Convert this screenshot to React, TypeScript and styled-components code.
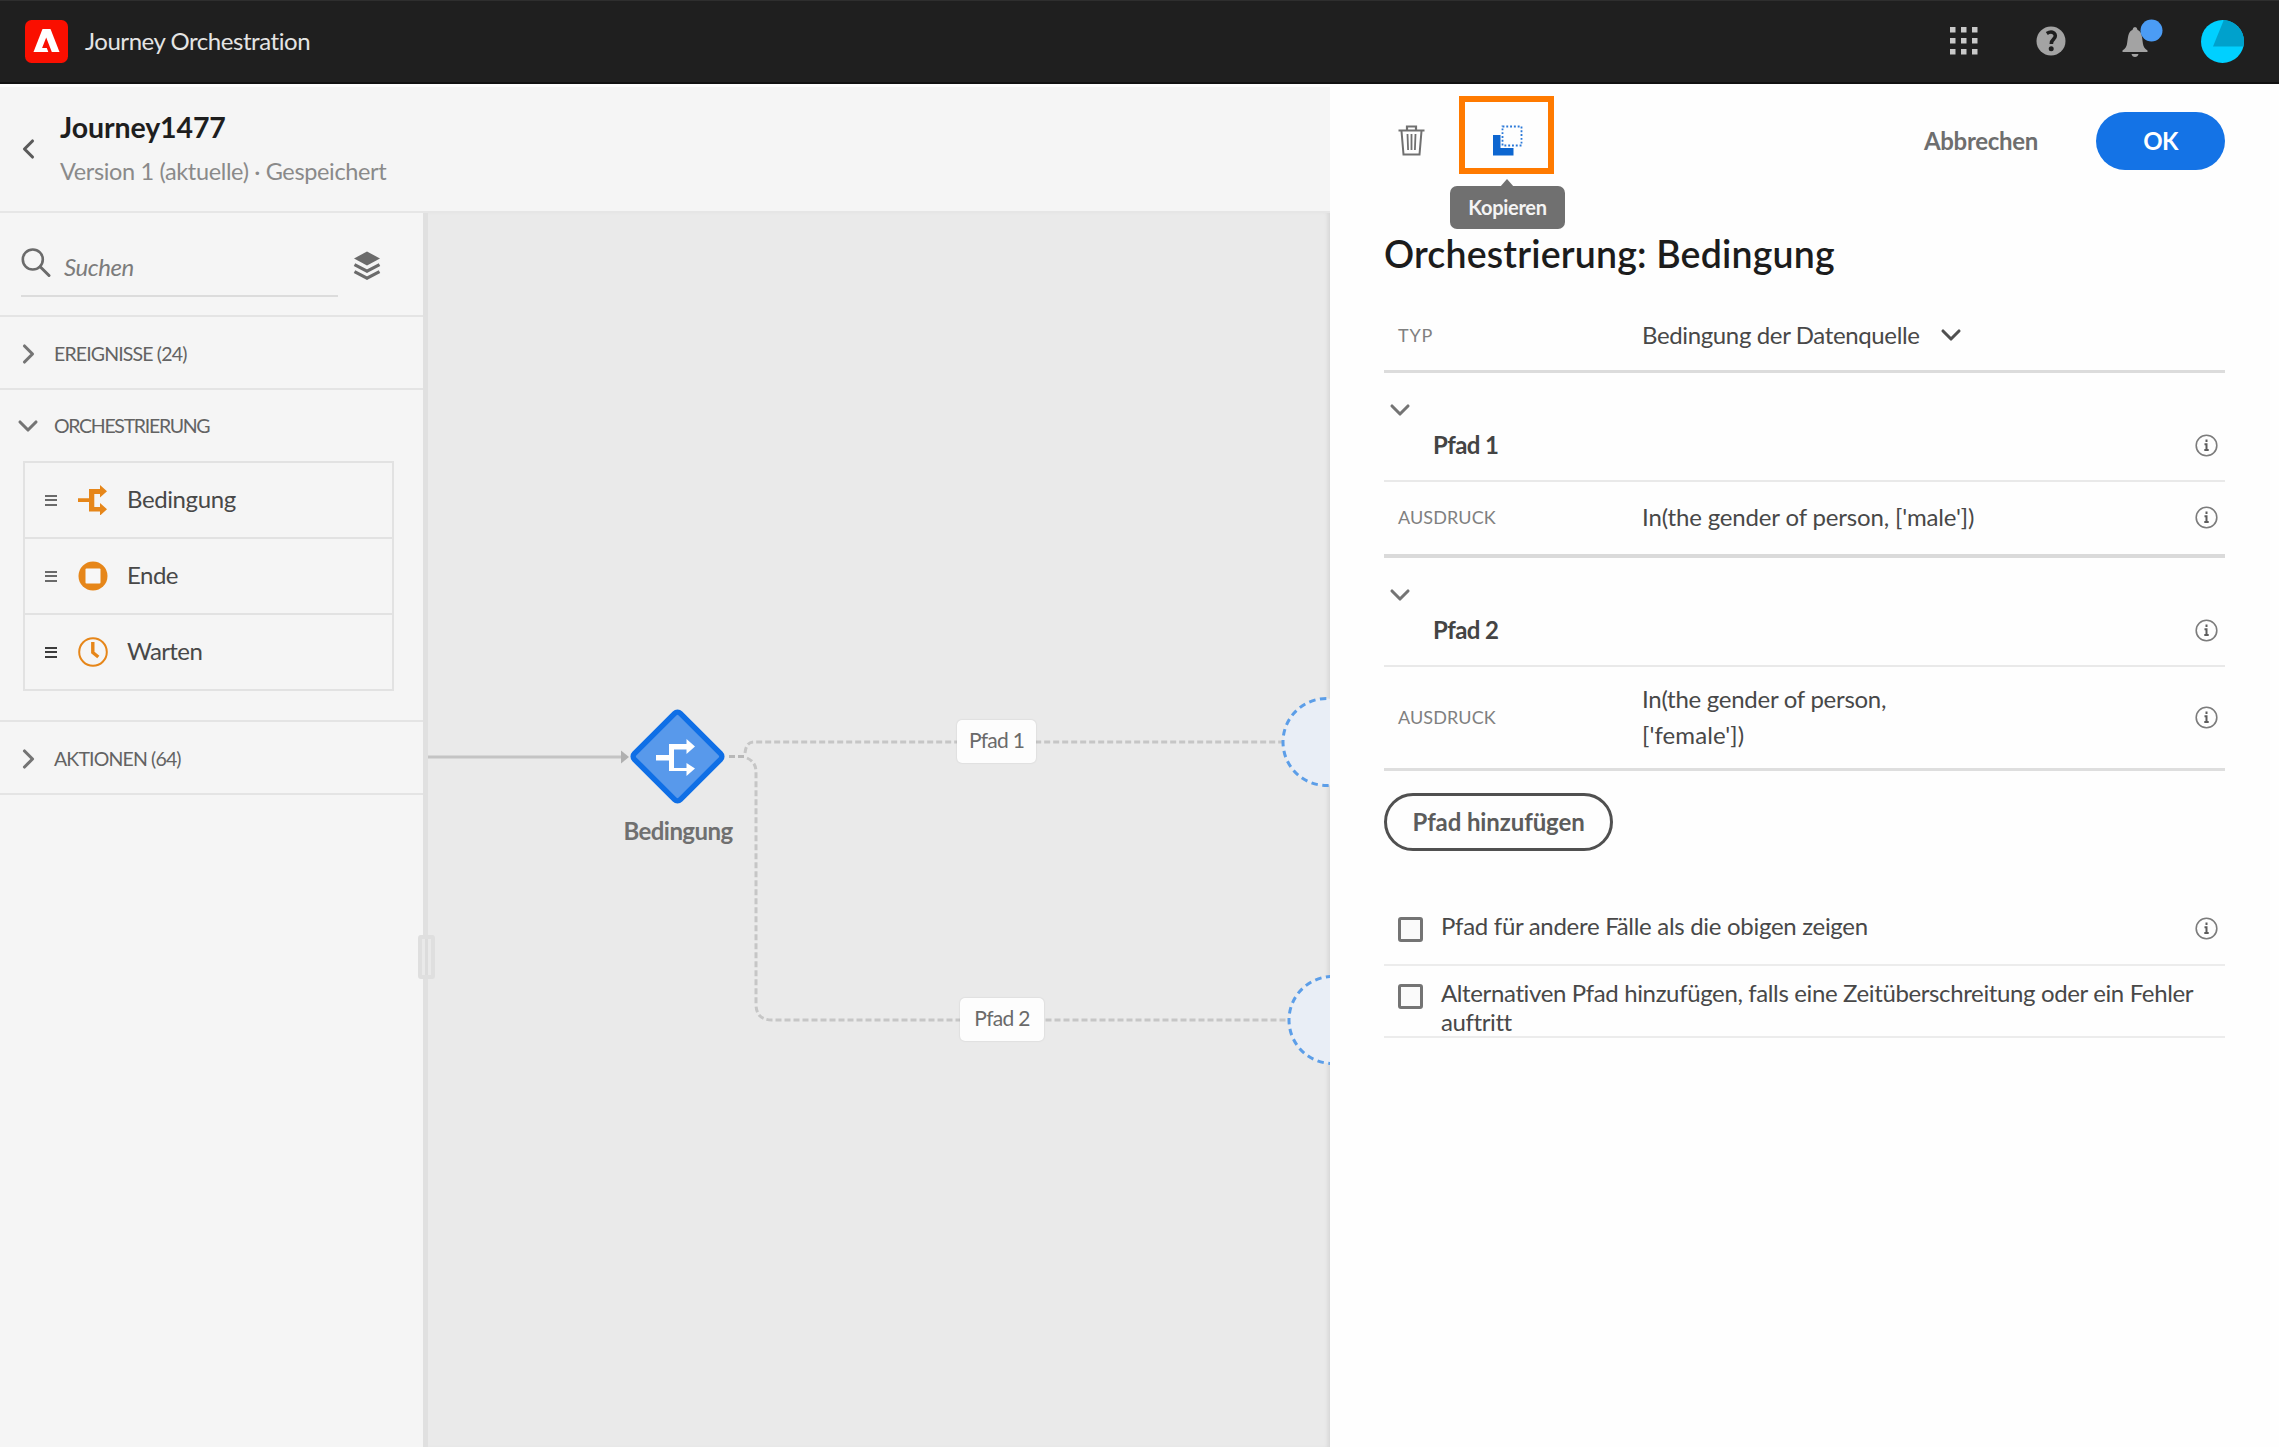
import React from "react";
import styled, { createGlobalStyle, css } from "styled-components";

const GlobalStyle = createGlobalStyle`
  *, *::before, *::after { box-sizing: border-box; }
  body { margin: 0; background: #fff; }
  svg { display: block; flex: none; }
  button { font: inherit; border: 0; background: none; padding: 0; margin: 0; }
`;

const Page = styled.div`
  display: flex;
  flex-direction: column;
  width: 2279px;
  height: 1447px;
  overflow: hidden;
  font-family: Lato, "Open Sans", sans-serif;
  color: #4b4b4b;
`;

type TextProps = { $size?: number; $weight?: number; $color?: string; $ls?: number; $lh?: number; $lift?: number };
const Text = styled.span<TextProps>`
  display: block;
  white-space: nowrap;
  font-size: ${(p) => p.$size ?? 24}px;
  font-weight: ${(p) => p.$weight ?? 400};
  color: ${(p) => p.$color ?? "#484848"};
  letter-spacing: ${(p) => p.$ls ?? 0}px;
  line-height: ${(p) => p.$lh ?? 30}px;
  padding-bottom: ${(p) => p.$lift ?? 0}px;
`;

/* Top bar */
const TopBar = styled.header`
  display: flex;
  align-items: center;
  height: 84px;
  flex: none;
  padding: 0 35px 1px 25px;
  background: #1f1f1f;
  border-top: 1px solid #2e2e2e;
  border-bottom: 2px solid #111;
`;
const Brand = styled.div`
  display: flex;
  align-items: center;
  gap: 17px;
`;
const TopActions = styled.div`
  display: flex;
  align-items: center;
  margin-left: auto;
`;
const Slot = styled.div<{ $w: number }>`
  width: ${(p) => p.$w}px;
  flex: none;
`;

const Body = styled.div`
  display: flex;
  flex: 1;
  min-height: 0;
`;
const Workspace = styled.div`
  display: flex;
  flex-direction: column;
  width: 1330px;
  flex: none;
`;
const JourneyHeader = styled.div`
  display: flex;
  align-items: center;
  gap: 23px;
  height: 129px;
  flex: none;
  padding-left: 18px;
  background: #f5f5f5;
  border-top: 3px solid #fdfdfd;
  border-bottom: 2px solid #e6e6e6;
`;
const Main = styled.div`
  display: flex;
  flex: 1;
  min-height: 0;
`;

/* Sidebar */
const Sidebar = styled.aside`
  position: relative;
  z-index: 1;
  width: 428px;
  flex: none;
  background: #f5f5f5;
  border-right: 5px solid #e0e0e0;
`;
const SearchBar = styled.div`
  display: flex;
  height: 104px;
  padding: 20px 0 0 21px;
  gap: 15px;
  border-bottom: 2px solid #e4e4e4;
`;
const SearchField = styled.div`
  display: flex;
  align-items: center;
  gap: 13px;
  width: 317px;
  height: 64px;
  padding-bottom: 2px;
  border-bottom: 2px solid #dcdcdc;
`;
const Placeholder = styled(Text)`
  font-style: italic;
  padding-top: 7px;
`;
const LayersButton = styled.button`
  align-self: flex-start;
  margin-top: 18px;
`;
const SectionHead = styled.div<{ $open?: boolean }>`
  display: flex;
  align-items: center;
  gap: 15px;
  height: ${(p) => (p.$open ? 71 : 73)}px;
  padding-left: 17px;
  ${(p) => !p.$open && css`
    padding-top: 2px;
    border-bottom: 2px solid #e4e4e4;
  `}
`;
const ActivityArea = styled.div`
  padding: 0 29px 29px 23px;
  border-bottom: 2px solid #e4e4e4;
`;
const ActivityList = styled.div`
  border: 2px solid #e2e2e2;
`;
const Activity = styled.div`
  display: flex;
  align-items: center;
  height: 76px;
  padding-left: 20px;
  & + & { border-top: 2px solid #e2e2e2; }
  &:first-child { height: 74px; }
`;
const Grip = styled.div<{ $dark?: boolean }>`
  width: 12px;
  height: 11px;
  margin-right: 21px;
  border: solid ${(p) => (p.$dark ? "#3c3c3c" : "#6a6a6a")};
  border-width: 2px 0;
  background: linear-gradient(currentColor, currentColor) center / 100% 2px no-repeat;
  color: ${(p) => (p.$dark ? "#3c3c3c" : "#6a6a6a")};
`;
const ActivityIcon = styled.div`
  width: 30px;
  margin-right: 19px;
`;
const ResizeHandle = styled.div`
  position: absolute;
  right: -12px;
  top: 722px;
  width: 17px;
  height: 44px;
  border-radius: 3px;
  border: 4px solid #dfdfdf;
  background: linear-gradient(90deg, #e9e9e9 0 3px, #dcdcdc 3px 6px, #e9e9e9 6px);
`;

/* Canvas */
const Canvas = styled.div`
  position: relative;
  flex: 1;
  overflow: hidden;
  background: #eaeaea;
  box-shadow: inset -4px 0 4px -2px rgba(0, 0, 0, 0.09);
`;
const Wires = styled.svg`
  position: absolute;
  left: 0;
  top: 0;
`;
const NodeLabel = styled.div<{ $x: number; $y: number }>`
  position: absolute;
  left: ${(p) => p.$x}px;
  top: ${(p) => p.$y}px;
  transform: translateX(-50%);
`;
const PathLabel = styled.div<{ $x: number; $y: number; $w: number }>`
  position: absolute;
  left: ${(p) => p.$x}px;
  top: ${(p) => p.$y}px;
  width: ${(p) => p.$w}px;
  height: 43px;
  padding-bottom: 4px;
  display: flex;
  align-items: center;
  justify-content: center;
  background: #fdfdfd;
  border-radius: 5px;
  box-shadow: 0 0 2px rgba(0, 0, 0, 0.14);
`;

/* Property panel */
const Panel = styled.section`
  flex: 1;
  display: flex;
  flex-direction: column;
  padding: 0 54px 0 54px;
  background: #fefefe;
`;
const PanelBar = styled.div`
  display: flex;
  align-items: flex-start;
  height: 139px;
  padding-left: 14px;
`;
const DeleteButton = styled.button`
  margin: 41px 34px 0 0;
`;
const CopyButton = styled.button`
  position: relative;
  margin-top: 11.5px;
  width: 95px;
  height: 78px;
  display: flex;
  justify-content: center;
  padding: 23.5px 0 0 2px;
  border: 6px solid #ff7a00;
`;
const Tooltip = styled.div`
  position: absolute;
  top: 84.5px;
  left: -15px;
  width: 115px;
  height: 43px;
  display: flex;
  align-items: center;
  justify-content: center;
  border-radius: 7px;
  background: #707070;
  &::before {
    content: "";
    position: absolute;
    top: -7px;
    left: 50px;
    border: solid transparent;
    border-width: 0 7.5px 8px;
    border-bottom-color: #707070;
  }
`;
const CancelButton = styled.button`
  margin: 42px 58px 0 auto;
`;
const OkButton = styled.button`
  width: 129px;
  height: 58px;
  margin-top: 27.5px;
  display: flex;
  align-items: center;
  justify-content: center;
  border-radius: 29px;
  background: #1473e6;
`;
const PanelTitle = styled.h1`
  height: 77px;
  margin: 0;
  padding-top: 6px;
`;
const Row = styled.div<{ $h: number; $line?: number; $lineColor?: string }>`
  display: flex;
  align-items: center;
  flex: none;
  height: ${(p) => p.$h}px;
  padding: 0 7px 0 14px;
  border-bottom: ${(p) => p.$line ?? 2}px solid ${(p) => p.$lineColor ?? "#e9e9e9"};
`;
const FieldName = styled(Text)`
  width: 244px;
`;
const Select = styled.div`
  display: flex;
  align-items: center;
  gap: 20px;
`;
const PathHead = styled.div`
  flex: none;
  height: 109px;
  padding: 26px 7px 0 5px;
  border-bottom: 2px solid #e9e9e9;
`;
const PathName = styled.div`
  display: flex;
  justify-content: space-between;
  align-items: center;
  height: 30px;
  margin-top: 10px;
  padding-left: 44px;
`;
const Info = styled.div`
  margin-left: auto;
  padding-bottom: 1px;
`;
const AddPath = styled.button`
  display: flex;
  align-items: center;
  justify-content: center;
  flex: none;
  width: 229px;
  height: 58px;
  margin: 22px 0 43px;
  border: 3px solid #505050;
  border-radius: 29px;
`;
const CheckRow = styled.div<{ $h: number; $top: number }>`
  display: flex;
  align-items: flex-start;
  flex: none;
  height: ${(p) => p.$h}px;
  padding: ${(p) => p.$top}px 7px 0 14px;
  border-bottom: 2px solid #ececec;
`;
const CheckBox = styled.span`
  width: 25px;
  height: 25px;
  flex: none;
  margin-right: 18px;
  border: 3px solid #747474;
  border-radius: 3px;
  background: #fafafa;
`;
const CheckText = styled.div`
  margin-top: -6px;
`;

const Chevron = ({ dir, color = "#747474" }: { dir: "left" | "right" | "down"; color?: string }) => {
  const d = { left: "M14.500 3 6.500 11l8 8", right: "M7.500 3 15.500 11 7.500 19", down: "M3 7 11 15l8-8" }[dir];
  return (
    <svg width="22" height="22" viewBox="0 0 22 22" fill="none" stroke={color} strokeWidth="3.1" strokeLinecap="round" strokeLinejoin="round">
      <path d={d} />
    </svg>
  );
};

const InfoIcon = () => (
  <Info>
    <svg width="23" height="23" viewBox="0 0 23 23" fill="none">
      <circle cx="11.5" cy="11.500" r="10.3" stroke="#7c7c7c" strokeWidth="1.6" />
      <path d="M11.500 5.500v2.500M9.500 10.300h2v5.500M9.300 16h4.400" stroke="#5c5c5c" strokeWidth="2" />
    </svg>
  </Info>
);

const Logo = () => (
  <svg width="43" height="43" viewBox="0 0 43 43">
    <rect width="43" height="43" rx="6.500" fill="#fa0f00" />
    <path fill="#fff" d="M17.500 9h8L34.500 32H8.500z" />
    <path fill="#fa0f00" d="M21.200 17.500 27 32.500h-3.500L21.800 28h-4.700z" />
  </svg>
);

const Split = ({ size, color }: { size: number; color: string }) => (
  <svg width={size} height={size} viewBox="0 0 30 30">
    <path fill={color} d="M0 13.200h11V4h11V0l7 6.300-7 6.300V9H16.300v13H22v-4l7 6.300-7 6.300V26.500H11V17H0z" />
  </svg>
);

const StopIcon = () => (
  <svg width="30" height="30" viewBox="0 0 30 30">
    <circle cx="15" cy="15" r="14.500" fill="#e68619" />
    <rect x="7.500" y="7.500" width="15" height="15" rx="1" fill="#f7f7f7" />
  </svg>
);

const ClockIcon = () => (
  <svg width="30" height="30" viewBox="0 0 30 30" fill="none" stroke="#e68619">
    <circle cx="15" cy="15" r="13.800" strokeWidth="2" />
    <path d="M14.800 5v10.500l5.500 4.500" strokeWidth="3.400" />
  </svg>
);

const activities = [
  { label: "Bedingung", icon: <Split size={30} color="#e68619" />, ls: -0.4 },
  { label: "Ende", icon: <StopIcon />, ls: -0.5 },
  { label: "Warten", icon: <ClockIcon />, ls: -0.6, dark: true },
];

const PathHeader = ({ name }: { name: string }) => (
  <PathHead>
    <Chevron dir="down" />
    <PathName>
      <Text $weight={700} $color="#444" $ls={-0.6} $lift={3}>{name}</Text>
      <InfoIcon />
    </PathName>
  </PathHead>
);

export default function App() {
  return (
    <Page>
      <GlobalStyle />
      <TopBar>
        <Brand>
          <Logo />
          <Text $color="#e4e4e4" $ls={-0.45} $lift={1}>Journey Orchestration</Text>
        </Brand>
        <TopActions>
          <svg width="28" height="28" viewBox="0 0 28 28" fill="#c8c8c8">
            {[0, 11, 22].map((y) => [0, 11, 22].map((x) => <rect key={`${x}-${y}`} x={x} y={y} width="5.500" height="5.500" />))}
          </svg>
          <Slot $w={58} />
          <svg width="30" height="30" viewBox="0 0 30 30">
            <circle cx="15" cy="15" r="14.500" fill="#a3a3a3" />
            <path d="M10.800 7.500q4-2.600 7 -.6 3 2.700 0 6-2.500 2.300-2.500 5.100" fill="none" stroke="#1f1f1f" strokeWidth="3.600" />
            <circle cx="15.200" cy="22.700" r="2.500" fill="#1f1f1f" />
          </svg>
          <Slot $w={56} />
          <svg width="42" height="44" viewBox="0 0 42 44">
            <path fill="#a3a3a3" d="M13 8q2 0 2.600 3c4.500 1.500 4.500 8 5.400 14 .4 2.500 1.500 4.500 4.500 6.500V33h-25v-1.500C3.500 29.500 4.500 27.500 5 25c1-6 1-12.500 5.400-14Q11 8 13 8zM9.500 35h7q-.7 3-3.500 3t-3.500-3z" />
            <circle cx="29.500" cy="11.500" r="11" fill="#4b9cf5" />
          </svg>
          <Slot $w={37} />
          <svg width="43" height="43" viewBox="0 0 43 43">
            <circle cx="21.500" cy="21.500" r="21.500" fill="#00d0ff" />
            <path d="M22.800 0A21.500 21.500 0 0 1 42.400 26.500H12z" fill="#00a1cc" />
          </svg>
        </TopActions>
      </TopBar>

      <Body>
        <Workspace>
          <JourneyHeader>
            <Slot $w={19}>
              <Chevron dir="left" color="#5a5a5a" />
            </Slot>
            <div>
              <Text $size={28.5} $weight={700} $color="#1e1e1e" $lh={44} $ls={-0.1}>Journey1477</Text>
              <Text $size={23.5} $color="#8a8a8a" $lh={44} $ls={-0.35}>Version 1 (aktuelle) · Gespeichert</Text>
            </div>
          </JourneyHeader>

          <Main>
            <Sidebar>
              <SearchBar>
                <SearchField>
                  <svg width="30" height="30" viewBox="0 0 30 30" fill="none" stroke="#6b6b6b" strokeWidth="2.600" strokeLinecap="round">
                    <circle cx="11.800" cy="11.500" r="10" />
                    <path d="M19.200 18.800 28 27.500" strokeWidth="3" />
                  </svg>
                  <Placeholder $color="#7c7c7c" $ls={-0.45}>Suchen</Placeholder>
                </SearchField>
                <LayersButton>
                  <svg width="28" height="30" viewBox="0 0 28 30">
                    <path fill="#6b6b6b" d="M14 .5 27 7.500 14 14.500 1 7.500z" />
                    <path fill="none" stroke="#6b6b6b" strokeWidth="3.200" d="M1.500 13.700 14 20.200l12.500-6.500M1.500 20.700 14 27.200l12.500-6.500" />
                  </svg>
                </LayersButton>
              </SearchBar>
              <SectionHead>
                <Chevron dir="right" />
                <Text $size={19.5} $color="#636363" $ls={-0.85}>EREIGNISSE (24)</Text>
              </SectionHead>
              <SectionHead $open>
                <Chevron dir="down" />
                <Text $size={19.5} $color="#636363" $ls={-1.3}>ORCHESTRIERUNG</Text>
              </SectionHead>
              <ActivityArea>
                <ActivityList>
                  {activities.map((a) => (
                    <Activity key={a.label}>
                      <Grip $dark={a.dark} />
                      <ActivityIcon>{a.icon}</ActivityIcon>
                      <Text $ls={a.ls} $lift={2}>{a.label}</Text>
                    </Activity>
                  ))}
                </ActivityList>
              </ActivityArea>
              <SectionHead>
                <Chevron dir="right" />
                <Text $size={19.5} $color="#636363" $ls={-0.85}>AKTIONEN (64)</Text>
              </SectionHead>
              <ResizeHandle />
            </Sidebar>

            <Canvas>
              <Wires width="902" height="1234" viewBox="428 213 902 1234" fill="none">
                <path d="M428 757H622" stroke="#c4c4c4" strokeWidth="3" />
                <path d="M621 750.500l8 6.500-8 6.500z" fill="#b0b0b0" />
                <g stroke="#c6c6c6" strokeWidth="3" strokeDasharray="6 3">
                  <path d="M729 756.500H745" stroke="#b8b8b8" />
                  <path d="M745 753q1-11 9-11H1283" />
                  <path d="M747 758q9 4 9 14V1004q0 16 16 16H1289" />
                </g>
                <g fill="#e9eef6" stroke="#5c9ee8" strokeWidth="3" strokeDasharray="6.500 4.500">
                  <circle cx="1326.500" cy="742" r="43.500" />
                  <circle cx="1332.500" cy="1020" r="43.500" />
                </g>
                <rect x="645" y="724" width="65" height="65" rx="4" transform="rotate(45 677.500 756.500)" fill="#5899eb" stroke="#0f6fe6" strokeWidth="5.500" />
                <path fill="#fff" d="M656 755h13V744h17.500v-5l8.500 7.500-8.500 7.500v-4.500H674v18.500h12.500v-5L695 768.500 686.500 776v-5H669V760.500H656z" />
              </Wires>
              <NodeLabel $x={250} $y={603}>
                <Text $weight={700} $color="#707070" $ls={-0.55}>Bedingung</Text>
              </NodeLabel>
              <PathLabel $x={529} $y={507} $w={79}>
                <Text $size={21} $color="#6a6a6a" $ls={-0.75}>Pfad 1</Text>
              </PathLabel>
              <PathLabel $x={532} $y={785} $w={84}>
                <Text $size={21} $color="#6a6a6a" $ls={-0.7}>Pfad 2</Text>
              </PathLabel>
            </Canvas>
          </Main>
        </Workspace>

        <Panel>
          <PanelBar>
            <DeleteButton>
              <svg width="27" height="31" viewBox="0 0 27 31" fill="none" stroke="#707070">
                <path d="M.500 5.500h26M9 5V1.500h9V5" strokeWidth="2.200" />
                <path d="M3.500 6l2 23.500h16l2-23.500" strokeWidth="2" />
                <path d="M9.500 9l.6 16M13.500 9v16M17.500 9l-.6 16" strokeWidth="1.800" />
              </svg>
            </DeleteButton>
            <CopyButton>
              <svg width="30" height="31" viewBox="0 0 30 31">
                <path fill="#0d66d0" d="M0 10h7.500v13H20.500v7.500H0z" />
                <rect x="9.500" y="1.500" width="19" height="19" fill="none" stroke="#2a78d8" strokeWidth="1.800" strokeDasharray="1.900 1.900" />
              </svg>
              <Tooltip>
                <Text $size={20} $weight={700} $color="#f4f4f4" $ls={-0.3} $lift={2}>Kopieren</Text>
              </Tooltip>
            </CopyButton>
            <CancelButton>
              <Text $weight={700} $color="#6e6e6e" $ls={-0.3}>Abbrechen</Text>
            </CancelButton>
            <OkButton>
              <Text $weight={700} $color="#fff" $ls={-0.7}>OK</Text>
            </OkButton>
          </PanelBar>

          <PanelTitle>
            <Text $size={37.5} $weight={600} $color="#1c1c1c" $lh={50} $ls={0.17}>Orchestrierung: Bedingung</Text>
          </PanelTitle>
          <Row $h={73} $line={3} $lineColor="#dcdcdc">
            <FieldName $size={18} $color="#808080" $ls={0.8} $lift={1}>TYP</FieldName>
            <Select>
              <Text $ls={-0.37}>Bedingung der Datenquelle</Text>
              <Chevron dir="down" color="#505050" />
            </Select>
          </Row>

          <PathHeader name="Pfad 1" />
          <Row $h={76} $line={4} $lineColor="#dadada">
            <FieldName $size={18} $color="#808080" $ls={0.1} $lift={2}>AUSDRUCK</FieldName>
            <Text $ls={-0.15} $lift={3}>In(the gender of person, ['male'])</Text>
            <InfoIcon />
          </Row>

          <PathHeader name="Pfad 2" />
          <Row $h={104} $line={3} $lineColor="#dedede">
            <FieldName $size={18} $color="#808080" $ls={0.1} $lift={1}>AUSDRUCK</FieldName>
            <div>
              <Text $lh={36} $ls={-0.27}>In(the gender of person,</Text>
              <Text $lh={36} $ls={0.1} $lift={2}>['female'])</Text>
            </div>
            <InfoIcon />
          </Row>

          <AddPath>
            <Text $weight={700} $color="#5c5c5c" $ls={-0.1}>Pfad hinzufügen</Text>
          </AddPath>

          <CheckRow $h={72} $top={23}>
            <CheckBox />
            <CheckText>
              <Text $ls={-0.3}>Pfad für andere Fälle als die obigen zeigen</Text>
            </CheckText>
            <InfoIcon />
          </CheckRow>
          <CheckRow $h={72} $top={18}>
            <CheckBox />
            <CheckText>
              <Text $lh={29} $ls={-0.37}>Alternativen Pfad hinzufügen, falls eine Zeitüberschreitung oder ein Fehler</Text>
              <Text $lh={29} $ls={-0.4}>auftritt</Text>
            </CheckText>
          </CheckRow>
        </Panel>
      </Body>
    </Page>
  );
}
